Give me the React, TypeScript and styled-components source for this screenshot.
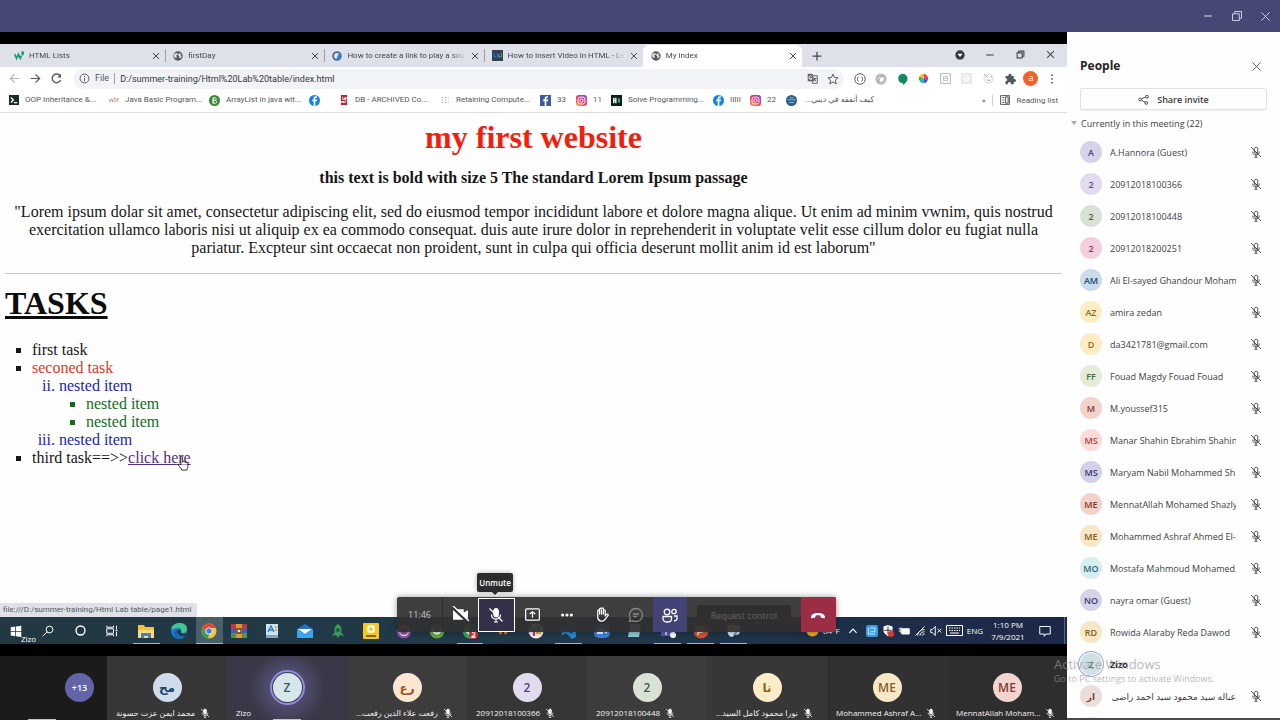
import React from "react";
import styled, { createGlobalStyle, css } from "styled-components";

const ui = `"Open Sans", "Noto Sans", "DejaVu Sans", sans-serif`;

const GlobalStyle = createGlobalStyle`
  * { box-sizing: border-box; }
  body { margin: 0; font-family: ${ui}; font-size: 9px; background: #000; }
  button { border: 0; padding: 0; background: none; font: inherit; color: inherit; display: flex; align-items: center; justify-content: center; }
  svg { display: block; flex: none; }
`;

/* ---------- frame ---------- */
const Screen = styled.div`
  display: flex;
  flex-direction: column;
  height: 100vh;
  overflow: hidden;
  position: relative;
`;
const TitleBar = styled.header`
  display: flex;
  justify-content: flex-end;
  align-items: center;
  flex: 0 0 32px;
  background: #464775;
  color: #d8d8ee;
`;
const TitleButton = styled.button`
  width: 29px;
  height: 32px;
`;
const Main = styled.div`
  display: flex;
  flex: 1;
  min-height: 0;
`;
const Stage = styled.main`
  display: flex;
  flex-direction: column;
  flex: 1;
  min-width: 0;
  padding-top: 12px;
  background: #000;
`;
const Desktop = styled.section`
  display: flex;
  flex-direction: column;
  flex: 1;
  min-height: 0;
  position: relative;
  background: #fefefe;
`;

/* ---------- browser ---------- */
const TabStrip = styled.div`
  display: flex;
  flex: 0 0 23px;
  padding: 0 2px 0 6px;
  background: #dee1e9;
  color: #45484d;
`;
const Tabs = styled.div`
  display: flex;
  flex: 0 0 796px;
`;
const Tab = styled.div<{ $active?: boolean; $last?: boolean }>`
  display: flex;
  align-items: center;
  gap: 5px;
  flex: 1 1 0;
  min-width: 0;
  padding: 0 8px;
  border-radius: 6px 6px 0 0;
  ${(p) => p.$active && css`background: #fff; margin-top: 1px;`}
  &::after {
    content: "";
    width: 1px;
    height: 13px;
    margin-right: -9px;
    background: ${(p) => (p.$active || p.$last ? "transparent" : "#9a9da5")};
  }
`;
const TabTitle = styled.button`
  flex: 1;
  min-width: 0;
  justify-content: flex-start;
  overflow: hidden;
  white-space: nowrap;
  font-size: 8px;
  line-height: 12px;
  font-family: Roboto, sans-serif;
  mask-image: linear-gradient(90deg, #000 88%, transparent);
`;
const NewTab = styled.button`
  width: 30px;
  height: 23px;
`;
const WindowControls = styled.div`
  display: flex;
  margin-left: auto;
  & > button { width: 30px; height: 21px; }
`;
const Toolbar = styled.div`
  display: flex;
  align-items: center;
  flex: 0 0 23px;
  padding: 0 4px;
  background: #fff;
  color: #55585c;
`;
const NavButton = styled.button<{ $dim?: boolean }>`
  width: 21px;
  height: 21px;
  opacity: ${(p) => (p.$dim ? 0.45 : 1)};
`;
const Omnibox = styled.div`
  display: flex;
  align-items: center;
  gap: 5px;
  flex: 1;
  min-width: 0;
  height: 20px;
  margin-left: 6px;
  padding: 0 3px 0 6px;
  border-radius: 10px;
  background: #f1f3f6;
  font-family: Roboto, sans-serif;
  font-size: 9px;
`;
const OmniLabel = styled.label`
  padding-right: 5px;
  border-right: 1px solid #9a9da2;
  line-height: 11px;
`;
const UrlInput = styled.input`
  flex: 1;
  min-width: 0;
  border: 0;
  padding: 0;
  background: none;
  font: inherit;
  color: #35383c;
  outline: 0;
`;
const OmniButton = styled.button`
  width: 16px;
  height: 16px;
`;
const Extensions = styled.div`
  display: flex;
  flex: 0 0 214px;
  margin-left: 5px;
  & > button { flex: 1 1 0; height: 20px; }
`;
const Profile = styled.span`
  width: 15px;
  height: 15px;
  border-radius: 50%;
  background: #f4602a;
  color: #fff;
  font-size: 9px;
  line-height: 14px;
  text-align: center;
`;
const Bookmarks = styled.nav`
  display: flex;
  align-items: center;
  gap: 11px;
  flex: 0 0 23px;
  padding: 0 9px 2px;
  border-bottom: 1px solid #dcdde0;
  background: #fff;
  color: #55585c;
  font-family: Roboto, "DejaVu Sans", sans-serif;
`;
const Bookmark = styled.a`
  display: flex;
  align-items: center;
  gap: 6px;
  flex: none;
  color: inherit;
  text-decoration: none;
`;
const BookmarkLabel = styled.span<{ $w: number }>`
  width: ${(p) => p.$w}px;
  line-height: 14px;
  font-size: 8px;
  white-space: nowrap;
`;
const BookmarksEnd = styled.div`
  display: flex;
  align-items: center;
  gap: 7px;
  margin-left: auto;
  white-space: nowrap;
  font-size: 8px;
`;
const Divider = styled.span`
  width: 1px;
  height: 11px;
  background: #cfd1d5;
`;

/* ---------- web page ---------- */
const Page = styled.article`
  flex: 1;
  min-height: 0;
  position: relative;
  padding: 6px 5px 0;
  color: #161616;
  font: 16px/18px "Liberation Serif", serif;
  overflow: hidden;
`;
const PageTitle = styled.h1`
  margin: 0 0 14px;
  color: #f11f10;
  font-size: 32px;
  line-height: 36px;
  text-align: center;
`;
const Lead = styled.p<{ $bold?: boolean }>`
  margin: 0 0 16px;
  font-weight: ${(p) => (p.$bold ? 700 : 400)};
  text-align: center;
`;
const Rule = styled.hr`
  height: 1px;
  margin: 0 0 11px;
  border: 0;
  background: #c8c8c8;
`;
const Heading = styled.h2`
  margin: 0 0 20px;
  color: #0c0c0c;
  font-size: 32px;
  line-height: 36px;
  text-decoration: underline;
  text-decoration-thickness: 3px;
`;
const TaskList = styled.ul<{ $color?: string }>`
  margin: 0;
  padding-left: 27px;
  list-style: square;
  color: ${(p) => p.$color || "inherit"};
`;
const Nested = styled.ol`
  margin: 0;
  padding-left: 27px;
  list-style: lower-roman;
  color: #2027b5;
`;
const RedItem = styled.li`
  color: #d8392f;
  &::marker { color: #161616; }
`;
const BlueItem = styled.li`
  &::marker { color: #2027b5; }
`;
const GreenItem = styled.li`
  &::marker { color: #176b1b; }
`;
const PageLink = styled.a`
  position: relative;
  color: #553080;
`;
const Pointer = styled.span`
  position: absolute;
  left: 49px;
  top: 7px;
`;
const StatusBubble = styled.div`
  position: absolute;
  left: 0;
  bottom: 0;
  height: 14px;
  width: 197px;
  padding-left: 3px;
  border-radius: 0 3px 0 0;
  background: #dee1e8;
  color: #55585c;
  font: 8px/14px Roboto, sans-serif;
  white-space: nowrap;
`;

/* ---------- Windows taskbar ---------- */
const Taskbar = styled.footer`
  display: flex;
  flex: 0 0 27px;
  background: linear-gradient(90deg, #223842, #21394a 55%, #1c2848);
  color: #fff;
  position: relative;
`;
const SystemButtons = styled.div`
  display: flex;
  flex: 0 0 130px;
  & > button { width: 32px; height: 27px; }
`;
const Apps = styled.div`
  display: flex;
  flex: 0 0 620px;
`;
const TaskbarApp = styled.button<{ $open?: boolean; $active?: boolean }>`
  flex: 1 1 0;
  height: 27px;
  background: ${(p) => (p.$active ? "#4b5f69" : "transparent")};
  border: solid transparent;
  border-width: 0 ${(p) => (p.$active ? 0 : 3)}px;
  background-clip: padding-box;
  box-shadow: ${(p) => (p.$open ? "inset 0 -1px 0 #78c0f8" : "none")};
  & > svg { width: 16px; height: 16px; }
`;
const Tray = styled.div`
  display: flex;
  align-items: center;
  gap: 4px;
  margin-left: auto;
  padding-right: 2px;
  font-size: 8px;
  white-space: nowrap;
`;
const Clock = styled.time`
  width: 42px;
  line-height: 12px;
  text-align: center;
`;
const TrayNote = styled.button`
  width: 32px;
  height: 27px;
  padding-right: 8px;
  border-right: 1px solid #5d6784;
`;
const SharerName = styled.span`
  position: absolute;
  left: 21px;
  bottom: -1px;
  font-size: 8px;
  line-height: 12px;
`;

/* ---------- meeting controls ---------- */
const Controls = styled.div`
  position: absolute;
  left: 397px;
  bottom: 12px;
  display: flex;
  width: 439px;
  height: 35px;
  border-radius: 2px;
  overflow: hidden;
  background: rgba(48, 47, 47, 0.93);
  box-shadow: 0 0 6px rgba(0, 0, 0, 0.4);
  color: #fff;
`;
const Timer = styled.span`
  flex: 0 0 46px;
  border-right: 1px solid #2c2c2c;
  color: #c5c5c5;
  font-size: 9px;
  line-height: 35px;
  text-align: center;
`;
const Control = styled.button<{ $kind?: "focus" | "people" | "dim" }>`
  flex: 1 1 0;
  min-width: 0;
  height: 35px;
  ${(p) => p.$kind === "focus" && css`height: 34px; margin: 1px 1px 0; border: 1px solid #fff; background: #33304a;`}
  ${(p) => p.$kind === "people" && css`background: #444375;`}
  ${(p) => p.$kind === "dim" && css`color: #858585;`}
`;
const RequestControl = styled.button`
  flex: 0 0 94px;
  height: 20px;
  margin: 8px 10px;
  background: #302f2e;
  color: #646464;
  font-size: 9px;
  white-space: nowrap;
`;
const HangUp = styled.button`
  flex: 0 0 35px;
  height: 35px;
  background: #9b2d46;
`;
const Tooltip = styled.div`
  position: absolute;
  left: 477px;
  bottom: 52px;
  width: 36px;
  border-radius: 2px;
  background: #2d2c2c;
  color: #fff;
  font: 600 8px/19px "Open Sans", sans-serif;
  text-align: center;
  box-shadow: 0 0 5px rgba(0, 0, 0, 0.3);
  &::after {
    content: "";
    position: absolute;
    left: 15px;
    top: 19px;
    border: 3px solid transparent;
    border-top-color: #2d2c2c;
  }
`;

/* ---------- participants ---------- */
const Strip = styled.section`
  display: flex;
  flex: 0 0 64px;
  margin-top: 12px;
  background: #1b1b1b;
`;
const Marker = styled.span`
  width: 28px;
  height: 1px;
  margin-top: auto;
  background: #c4c4c4;
`;
const More = styled.div`
  display: flex;
  flex: 0 0 107px;
  justify-content: space-between;
  padding: 17px 13px 0 28px;
`;
const Tile = styled.div<{ $speaking?: boolean; $shade: string }>`
  display: flex;
  flex-direction: column;
  align-items: center;
  flex: 1 1 0;
  min-width: 0;
  padding-top: 17px;
  background: ${(p) => (p.$speaking ? "radial-gradient(circle at 50% 50%, #625d92, #3a3847 56%)" : p.$shade)};
`;
const Avatar = styled.span<{ $bg: string; $fg: string; $size: number; $text?: number; $ring?: boolean }>`
  display: flex;
  align-items: center;
  justify-content: center;
  flex: none;
  width: ${(p) => p.$size}px;
  height: ${(p) => p.$size}px;
  border-radius: 50%;
  background: ${(p) => p.$bg};
  color: ${(p) => p.$fg};
  font-weight: 600;
  font-size: ${(p) => p.$text || 9}px;
  box-shadow: ${(p) => (!p.$ring ? "none" : p.$size > 22 ? "0 0 0 1px #3b3854, 0 0 0 3px #908ce0" : "0 0 0 1px #fff, 0 0 0 2px #9fa2ea")};
`;
const TileLabel = styled.div`
  display: flex;
  align-items: center;
  align-self: stretch;
  gap: 5px;
  margin-top: 5px;
  padding-left: 9px;
  color: #f2f2f2;
  font-size: 8px;
  line-height: 12px;
  white-space: nowrap;
`;

/* ---------- people panel ---------- */
const Panel = styled.aside`
  display: flex;
  flex-direction: column;
  flex: 0 0 213px;
  padding-top: 22px;
  border-bottom: 2px solid #4a4a4e;
  background: #fefefe;
  color: #403f3e;
`;
const PanelHead = styled.div`
  display: flex;
  align-items: center;
  justify-content: space-between;
  padding: 0 18px 0 13px;
`;
const PanelTitle = styled.h2`
  margin: 0;
  color: #252424;
  font-size: 12px;
  line-height: 24px;
`;
const ShareInvite = styled.button`
  gap: 8px;
  height: 22px;
  margin: 10px 13px 0;
  border: 1px solid #e3e2e1;
  border-radius: 2px;
  color: #3b3a39;
  font-weight: 600;
  box-shadow: 0 1px 1px rgba(0, 0, 0, 0.06);
`;
const Section = styled.button`
  justify-content: flex-start;
  gap: 4px;
  height: 26px;
  padding-left: 4px;
`;
const People = styled.ul`
  flex: 1;
  min-height: 0;
  overflow: hidden;
  margin: 0;
  padding: 0 18px 0 13px;
  list-style: none;
`;
const Person = styled.li<{ $bold?: boolean }>`
  display: flex;
  align-items: center;
  height: 32px;
  font-weight: ${(p) => (p.$bold ? 700 : 400)};
  ${(p) => p.$bold && css`color: #222;`}
`;
const Name = styled.span`
  width: 126px;
  margin: 0 14px 0 8px;
  overflow: hidden;
  white-space: nowrap;
`;
const Watermark = styled.div`
  position: absolute;
  right: 55px;
  bottom: 34px;
  width: 171px;
  color: rgba(150, 150, 150, 0.7);
  font-size: 9px;
  line-height: 14px;
  white-space: nowrap;
  pointer-events: none;
`;
const WatermarkTitle = styled.div`
  font-size: 13px;
  line-height: 16px;
`;

/* ---------- icons ---------- */
type IconProps = { size?: number; box?: number; stroke?: number; children: React.ReactNode };
const Icon = ({ size = 10, box = 16, stroke = 1.3, children }: IconProps) => (
  <svg width={size} height={size} viewBox={`0 0 ${box} ${box}`} fill="none" stroke="currentColor" strokeWidth={stroke} aria-hidden="true">
    {children}
  </svg>
);
const CloseIcon = ({ size = 8, stroke = 2 }) => <Icon size={size} stroke={stroke}><path d="M2 2l12 12M14 2L2 14" /></Icon>;
const MinimizeIcon = () => <Icon size={10}><path d="M2 8h12" strokeWidth={1.8} /></Icon>;
const RestoreIcon = ({ stroke = 1.5 }) => <Icon size={12} stroke={stroke}><path d="M2 5h9v9H2zM5 5V2h9v9h-3" /></Icon>;
const MicOff = ({ size = 12, solid = false }) => (
  <Icon size={size} stroke={1.2}>
    <path d="M5.8 3.5a2.3 2.3 0 014.5 0V8a2.3 2.3 0 01-4.5 0z" fill={solid ? "currentColor" : "none"} />
    <path d="M3.5 7.5c0 6 9 6 9 0M8 12v3M6 15h4M1.5 1.5l13 13" />
  </Icon>
);
const Globe = () => (
  <Icon size={10}>
    <circle cx="8" cy="8" r="7.5" fill="#55585e" stroke="none" />
    <path d="M3 4l4-1 1 2-3 2 1 2-1 3-3-3-1-2zM10 3l3 2-1 2 2 1-2 4-2-1v-3L8 7z" fill="#dfe1e6" stroke="none" />
  </Icon>
);
const Facebook = ({ square = false }) => (
  <Icon size={11}>
    {square ? <rect width="16" height="16" fill="#3f5c9a" stroke="none" /> : <circle cx="8" cy="8" r="8" fill="#1382f0" stroke="none" />}
    <path d="M9.2 16V9h2.2l.4-2.3H9.2V5.4c0-1 .4-1.4 2.4-1.2V2.1C8.2 1.5 6.8 2.7 6.8 5.2v1.5H4.7V9h2.1v7z" fill="#fff" stroke="none" />
  </Icon>
);
const Instagram = () => (
  <Icon size={11}>
    <defs><linearGradient id="ig" x1="0" y1="1" x2=".7" y2="0"><stop stopColor="#ffb13c" /><stop offset=".5" stopColor="#ee3e67" /><stop offset="1" stopColor="#9546c6" /></linearGradient></defs>
    <rect width="16" height="16" rx="4" fill="url(#ig)" stroke="none" />
    <rect x="3" y="3" width="10" height="10" rx="3" stroke="#fff" /><circle cx="8" cy="8" r="2.4" stroke="#fff" />
  </Icon>
);
const W3 = () => <Icon><path d="M1 5l3 7 3-7 3 7 2-5M12 2h3l-2 2 2 1-2 1" stroke="#159a72" strokeWidth="2.4" /></Icon>;
const BlueRing = () => <Icon><circle cx="8" cy="8" r="6.2" stroke="#506b8a" strokeWidth="3" /><path d="M7 13L11 3l3 3-1 6-4 2z" fill="#2c83dc" stroke="none" /></Icon>;
const LwTile = () => <Icon size={11}><rect width="16" height="16" fill="#343e50" stroke="none" /><path d="M3 5v5h3M8 5v5h2V6v4h2" stroke="#2f86d4" /><path d="M12 5h2v5h-3" stroke="#75a342" /></Icon>;

const bookmarks: { icon: React.ReactNode; label: string; w: number; rtl?: boolean }[] = [
  { icon: <Icon><rect width="16" height="16" fill="#1a2a2b" stroke="none" /><path d="M3 4l4 4-4 4M8 12h5" stroke="#fff" strokeWidth="2" /></Icon>, label: "OOP Inheritance &...", w: 73 },
  { icon: <Icon><path d="M0 6l2 5 2-5 2 5 1-5M8 5h3l-2 2 2 2-3 2" stroke="#d8817b" /><path d="M13 11V6h3" stroke="#888" /></Icon>, label: "Java Basic Program...", w: 73 },
  { icon: <Icon size={11}><circle cx="8" cy="8" r="8" fill="#3a8a33" stroke="none" /><path d="M6 4h3c2 0 2 4 0 4H6zm0 4h3c3 0 3 4 0 4H6zm0-4v8" stroke="#fff" /></Icon>, label: "ArrayList in java wit...", w: 72 },
  { icon: <Facebook />, label: "", w: 2 },
  { icon: <Icon><path d="M3 0h10v4H8v2h5v10H3v-4h5v-2H3z" fill="#a92c31" stroke="none" /><path d="M6 3v4h4v5H6" stroke="#fff" /></Icon>, label: "DB - ARCHIVED Co...", w: 74 },
  { icon: <Icon><path d="M2 4h3m2 0h3m2 0h2M2 8h4m2 0h3m2 0h1M2 12h3m2 0h3m2 0h2" stroke="#aaa" /></Icon>, label: "Retaining Compute...", w: 73 },
  { icon: <Facebook square />, label: "33", w: 8 },
  { icon: <Instagram />, label: "11", w: 7 },
  { icon: <Icon size={11}><rect width="16" height="16" fill="#111c1d" stroke="none" /><path d="M4 4v8M7 4v8M4 8h3" stroke="#fff" strokeWidth="2" /><path d="M10 5h3v6h-3z" fill="#26b978" stroke="none" /></Icon>, label: "Solve Programming...", w: 74 },
  { icon: <Facebook />, label: "IIIII", w: 9 },
  { icon: <Instagram />, label: "22", w: 8 },
  { icon: <Icon size={11}><circle cx="8" cy="8" r="8" fill="#285a87" stroke="none" /><path d="M2 7h12M4 11h8M5 4h6" stroke="#9fc3df" /></Icon>, label: "كيف أتفقه في ديني...", w: 71, rtl: true },
];

const extensions: { name: string; icon: React.ReactNode }[] = [
  { name: "Braces", icon: <Icon size={12}><circle cx="8" cy="8" r="7" /><path d="M6 5C4 5 6 7 4 8c2 1 0 3 2 3M10 5c2 0 0 2 2 3-2 1 0 3-2 3" /></Icon> },
  { name: "Rings", icon: <Icon size={12}><circle cx="8" cy="8" r="5.5" stroke="#bbb" strokeWidth="4" /><path d="M5 12C5 7 8 4 11 4" stroke="#888" /></Icon> },
  { name: "Chat", icon: <Icon size={12}><path d="M8 1a6.500 6.500 0 016 7c0 3-3 6-6 8v-2C-1 13 0 1 8 1z" fill="#128a63" stroke="none" /></Icon> },
  { name: "Colour wheel", icon: <Icon size={11}><path d="M8 8V1a7 7 0 016 4z" fill="#ff3b30" stroke="none" /><path d="M8 8l6-3a7 7 0 010 6z" fill="#c02ad0" stroke="none" /><path d="M8 8l6 3a7 7 0 01-6 4z" fill="#2a52e8" stroke="none" /><path d="M8 8v7a7 7 0 01-6-4z" fill="#12b8c8" stroke="none" /><path d="M8 8l-6 3a7 7 0 010-6z" fill="#2cb62c" stroke="none" /><path d="M8 8L2 5a7 7 0 016-4z" fill="#f8c400" stroke="none" /></Icon> },
  { name: "Reader", icon: <Icon size={11}><rect x="1" y="1" width="14" height="14" stroke="#aaa" /><path d="M5 5h6v6H5zM5 8h6" stroke="#bbb" /></Icon> },
  { name: "Blank", icon: <Icon size={11}><rect x="1" y="1" width="14" height="14" fill="#efefef" stroke="#ddd" /><circle cx="8" cy="8" r="3" stroke="#fff" /></Icon> },
  { name: "Face", icon: <Icon size={11}><circle cx="8" cy="8" r="6.5" stroke="#ccc" /><path d="M2 2l4 4M11 5l2 1M6 6h1M6 10c2 1 3 1 5 0" stroke="#888" /></Icon> },
  { name: "Extensions", icon: <Icon size={12}><path d="M2 4h4c-1-4 5-4 4 0h3v4c4-1 4 5 0 4v3H9c1-4-4-4-4 0H2v-4c3 0 3-4 0-4z" fill="#55585c" stroke="none" /></Icon> },
  { name: "Profile", icon: <Profile>a</Profile> },
  { name: "Menu", icon: <Icon size={12}><path d="M8 2v2M8 7v2M8 12v2" strokeWidth="2.2" /></Icon> },
];

const Dot = ({ c, children }: { c: string; children?: React.ReactNode }) => (
  <Icon><circle cx="8" cy="8" r="7.5" fill={c} stroke="none" />{children}</Icon>
);
const apps: { name: string; icon: React.ReactNode; open?: boolean; active?: boolean }[] = [
  { name: "File Explorer", open: true, icon: <Icon><path d="M0 2h6l1 2h9v11H0z" fill="#f4c13f" stroke="none" /><path d="M0 7h16v8H0z" fill="#ffdb76" stroke="none" /><path d="M3 15v-5h10v5h-3v-2H6v2z" fill="#3487d2" stroke="none" /></Icon> },
  { name: "Edge", icon: <Icon><circle cx="8" cy="8" r="8" fill="#147ed0" stroke="none" /><path d="M0 7C1-2 16-2 16 6c0 4-5 5-6 3 1-3-1-5-4-4-3 0-5 1-6 2z" fill="#42c78e" stroke="none" /><path d="M6 8c0 4 4 6 8 5 1 0 2-2 1-3-2 1-5 1-5-1 1-2-3-4-4-1z" fill="#21384a" stroke="none" /><path d="M6 8c-1 4 3 8 7 6-5 4-11 0-10-5 1-2 3-3 5-2-1 0-2 0-2 1z" fill="#1665b4" stroke="none" /></Icon> },
  { name: "Chrome", open: true, active: true, icon: <Icon><circle cx="8" cy="8" r="7.5" fill="#f0c63a" stroke="none" /><path d="M1.500 4.200A7.500 7.500 0 0114.800 5H8L5 9.500z" fill="#df4935" stroke="none" /><path d="M1.500 4.200L5 10l3 1.500L7 15.500A7.500 7.500 0 011.500 4.200z" fill="#3b9f52" stroke="none" /><circle cx="8" cy="8" r="3.500" fill="#fff" stroke="none" /><circle cx="8" cy="8" r="2.700" fill="#3d7ee8" stroke="none" /></Icon> },
  { name: "WinRAR", icon: <Icon><path d="M0 1h16v5H0z" fill="#b73a48" stroke="none" /><path d="M0 6h16v4H0z" fill="#3f61b0" stroke="none" /><path d="M0 10h16v5H0z" fill="#4b944b" stroke="none" /><path d="M5 1h6v14H5z" fill="#d99a36" stroke="none" /><path d="M6 6h4v4H6z" fill="#fff2b8" stroke="#713522" /></Icon> },
  { name: "WordPad", icon: <Icon><path d="M2 1h12v13H2z" fill="#c9e3f5" stroke="none" /><path d="M2 12h12v3H2z" fill="#8aa4b8" stroke="none" /><path d="M4 9l3-6 3 6M5 7h4" stroke="#287cc0" /><path d="M11 4h2M11 7h2" stroke="#e88d36" /></Icon> },
  { name: "Mail", icon: <Icon><path d="M0 6l8-5 8 5v9H0z" fill="#1877c9" stroke="none" /><path d="M1 6h14l-7 5z" fill="#fff" stroke="none" /><path d="M0 6l8 5 8-5v9H0z" fill="#35a5ed" stroke="none" /></Icon> },
  { name: "Rocket", icon: <Icon><path d="M8 1c4 3 4 6 3 8l3 4-4-1-2 3-2-3-4 1 3-4C4 7 4 4 8 1z" fill="#3e9a5c" stroke="none" /><circle cx="8" cy="7" r="2" fill="#1f5d43" stroke="none" /></Icon> },
  { name: "Player", icon: <Icon><rect width="16" height="16" rx="1" fill="#f7c91f" stroke="none" /><circle cx="8" cy="6" r="3" stroke="#fff" strokeWidth="2" /><path d="M3 13h10" stroke="#7d6920" strokeWidth="2" /></Icon> },
  { name: "Tor", icon: <Dot c="#8450a0"><circle cx="8" cy="8" r="4.5" stroke="#e8d8ee" /></Dot> },
  { name: "uTorrent", icon: <Dot c="#62a544"><path d="M4 5c0 7 6 7 8 2" stroke="#fff" strokeWidth="2" /></Dot> },
  { name: "WhatsApp", open: true, icon: <Dot c="#32a85b"><path d="M4 4c0 5 2 7 5 7" stroke="#fff" strokeWidth="2" /><circle cx="11.500" cy="11.500" r="4.500" fill="#dc3138" stroke="none" /><path d="M10 10c2-1.500 3.500 0 2.500 1.500L10 14h3.500" stroke="#fff" /></Dot> },
  { name: "Editor", icon: <Icon><path d="M2 3c4 0 5 3 3 8M14 3c-4 0-5 3-3 8" stroke="#dd7d2f" strokeWidth="3" /></Icon> },
  { name: "Slack", icon: <Dot c="#f6f0f0"><path d="M4 6h4" stroke="#35b6dc" strokeWidth="2" /><path d="M10 3v5" stroke="#33a874" strokeWidth="2" /><path d="M8 10h5" stroke="#e7b534" strokeWidth="2" /><path d="M6 8v5" stroke="#d7336a" strokeWidth="2" /></Dot> },
  { name: "VS Code", open: true, icon: <Icon><path d="M11 0l4 2v12l-4 2-6-6-3 2-2-1 3-3-3-3 2-1 3 2zM11 5L7 8l4 3z" fill="#238bd2" stroke="none" /></Icon> },
  { name: "Zoom", icon: <Icon><rect y="1" width="16" height="14" rx="5" fill="#3f7fe4" stroke="none" /><path d="M3 6h6v5H3zM10 8l3-2v5l-3-2z" fill="#fff" stroke="none" /></Icon> },
  { name: "Notepad", icon: <Icon><path d="M3 1h11l-2 13H1z" fill="#8bcbd7" stroke="none" /><path d="M4 5h7M4 8h7" stroke="#fff" /></Icon> },
  { name: "Teams", open: true, icon: <Icon><path d="M1 3h10v10H1z" fill="#5558b8" stroke="none" /><circle cx="12" cy="4" r="3" fill="#7378d7" stroke="none" /><path d="M3 6h6M6 6v6" stroke="#fff" /><circle cx="13" cy="12" r="3" fill="#fff" stroke="none" /></Icon> },
  { name: "PowerPoint", open: true, icon: <Dot c="#cc5434"><path d="M5 12V5h3c3 0 3 4 0 4H5" stroke="#fff" /></Dot> },
  { name: "Paint", open: true, icon: <Icon><path d="M2 3c7-5 14 0 12 6-2 5-4 1-6 3-2 5-9-1-6-9z" fill="#d7e5ec" stroke="none" /><path d="M15 3l-7 9" stroke="#56a5d0" strokeWidth="2" /><circle cx="5" cy="6" r="1.5" fill="#e45a42" stroke="none" /></Icon> },
];

const tiles = [
  { initials: "مح", name: "محمد ايمن عزت حسونة", bg: "#cfdceb", fg: "#20446b", shade: "#373737", rtl: true },
  { initials: "Z", name: "Zizo", bg: "#d7e6e9", fg: "#39575d", shade: "#3a3847", speaking: true },
  { initials: "رع", name: "رفعت علاء الدين رفعت...", bg: "#fbe6d2", fg: "#955522", shade: "#3c3c3c", rtl: true },
  { initials: "2", name: "20912018100366", bg: "#e1dced", fg: "#4f4280", shade: "#363636" },
  { initials: "2", name: "20912018100448", bg: "#dae2d6", fg: "#455e38", shade: "#3c3c3c" },
  { initials: "نا", name: "نورا محمود كامل السيد...", bg: "#fdecc8", fg: "#8c661a", shade: "#373737", rtl: true },
  { initials: "ME", name: "Mohammed Ashraf A...", bg: "#f8e8c8", fg: "#836125", shade: "#313131" },
  { initials: "ME", name: "MennatAllah Moham...", bg: "#f3d5d0", fg: "#803b35", shade: "#2e2e2e" },
];

const people = [
  ["A", "A.Hannora (Guest)", "#d5d3ea", "#454080"],
  ["2", "20912018100366", "#e0dced", "#594b83"],
  ["2", "20912018100448", "#dae1d6", "#465d3c"],
  ["2", "20912018200251", "#f4cfdd", "#922d56"],
  ["AM", "Ali El-sayed Ghandour Moham", "#cbdbea", "#204a77"],
  ["AZ", "amira zedan", "#fdedc4", "#8e6b1d"],
  ["D", "da3421781@gmail.com", "#fdecc3", "#8e6c1d"],
  ["FF", "Fouad Magdy Fouad Fouad", "#e2ecd9", "#486c32"],
  ["M", "M.youssef315", "#f1d2cc", "#893c30"],
  ["MS", "Manar Shahin Ebrahim Shahin", "#fadbd7", "#a44440"],
  ["MS", "Maryam Nabil Mohammed Sh.", "#d2d1e8", "#383474"],
  ["ME", "MennatAllah Mohamed Shazly", "#f1d3cd", "#8b352a"],
  ["ME", "Mohammed Ashraf Ahmed El-", "#f8e7c6", "#815d1b"],
  ["MO", "Mostafa Mahmoud Mohamed.", "#d6eef0", "#306a70"],
  ["NO", "nayra omar (Guest)", "#d5d3e8", "#403a74"],
  ["RD", "Rowida Alaraby Reda Dawod", "#f8e7c6", "#805e20"],
  ["Z", "Zizo", "#cfe1e5", "#456e77"],
  ["ار", "عباله سيد محمود سيد احمد راضى", "#eaddda", "#784b43"],
  ["", "", "#fbe4c2", "#805e20"],
];
const isArabic = (text: string) => /[\u0600-\u06ff]/.test(text);

const BrowserTab = ({ icon, title, active, last }: { icon: React.ReactNode; title: string; active?: boolean; last?: boolean }) => (
  <Tab $active={active} $last={last}>
    {icon}
    <TabTitle>{title}</TabTitle>
    <button aria-label={`Close ${title}`}><CloseIcon /></button>
  </Tab>
);

export default function App() {
  return (
    <Screen>
      <GlobalStyle />
      <TitleBar>
        <TitleButton aria-label="Minimize"><MinimizeIcon /></TitleButton>
        <TitleButton aria-label="Restore"><RestoreIcon stroke={1.2} /></TitleButton>
        <TitleButton aria-label="Close"><CloseIcon size={11} stroke={1.3} /></TitleButton>
      </TitleBar>
      <Main>
        <Stage>
          <Desktop>
            <TabStrip>
              <Tabs>
                <BrowserTab icon={<W3 />} title="HTML Lists" />
                <BrowserTab icon={<Globe />} title="firstDay" />
                <BrowserTab icon={<BlueRing />} title="How to create a link to play a sou" />
                <BrowserTab icon={<LwTile />} title="How to Insert Video in HTML - Le" last />
                <BrowserTab icon={<Globe />} title="My index" active />
              </Tabs>
              <NewTab aria-label="New tab"><Icon><path d="M8 1v14M1 8h14" strokeWidth="2" /></Icon></NewTab>
              <WindowControls>
                <button aria-label="Search tabs"><Icon><circle cx="8" cy="8" r="7.5" fill="#35383e" stroke="none" /><path d="M4 6h8l-4 5z" fill="#fff" stroke="none" /></Icon></button>
                <button aria-label="Minimize window"><MinimizeIcon /></button>
                <button aria-label="Restore window"><Icon size={9} stroke={2}><path d="M2 5h9v9H2zM5 5V2h9v9h-3" /></Icon></button>
                <button aria-label="Close window"><CloseIcon size={9} stroke={1.8} /></button>
              </WindowControls>
            </TabStrip>
            <Toolbar>
              <NavButton $dim aria-label="Back"><Icon size={11} stroke={1.8}><path d="M15 8H2M8 2L2 8l6 6" /></Icon></NavButton>
              <NavButton aria-label="Forward"><Icon size={11} stroke={1.8}><path d="M1 8h13M8 2l6 6-6 6" /></Icon></NavButton>
              <NavButton aria-label="Reload"><Icon size={11} stroke={2}><path d="M13.5 4.5A6.3 6.3 0 1014 10" /><path d="M14.5 1v5.5H9z" fill="currentColor" stroke="none" /></Icon></NavButton>
              <Omnibox>
                <Icon size={11} stroke={1.4}><circle cx="8" cy="8" r="6.5" /><path d="M8 7v5M8 4v1.5" /></Icon>
                <OmniLabel htmlFor="url">File</OmniLabel>
                <UrlInput id="url" defaultValue="D:/summer-training/Html%20Lab%20table/index.html" />
                <OmniButton aria-label="Translate"><Icon size={11}><path d="M6 4h9v11H8z" /><path d="M1 1h7l3 11H1z" fill="#666" stroke="none" /><path d="M7 5a2.5 2.5 0 10.5 3H5" stroke="#fff" /><path d="M10 8h4M12 7c0 3-2 4-2 4M11 9l2 3" /></Icon></OmniButton>
                <OmniButton aria-label="Bookmark"><Icon size={12}><path d="M8 1.5l2 4.500 4.800.4-3.700 3.200 1.200 4.900L8 12l-4.300 2.500 1.200-4.900L1.200 6.400 6 6z" /></Icon></OmniButton>
              </Omnibox>
              <Extensions>
                {extensions.map((e) => <button key={e.name} aria-label={e.name}>{e.icon}</button>)}
              </Extensions>
            </Toolbar>
            <Bookmarks>
              {bookmarks.map((b, i) => (
                <Bookmark key={i} href="#" aria-label={b.label || "Facebook"}>
                  {b.icon}
                  <BookmarkLabel $w={b.w} dir={b.rtl ? "rtl" : "ltr"}>{b.label}</BookmarkLabel>
                </Bookmark>
              ))}
              <BookmarksEnd>
                <button aria-label="More bookmarks">»</button>
                <Divider />
                <Bookmark as="button"><Icon stroke={1.6}><path d="M1 1h14v14H1zM4 4h3M4 8h3M4 12h3M9 3h4v10H9z" /></Icon>Reading list</Bookmark>
              </BookmarksEnd>
            </Bookmarks>
            <Page>
              <PageTitle>my first website</PageTitle>
              <Lead $bold>this text is bold with size 5 The standard Lorem Ipsum passage</Lead>
              <Lead>
                "Lorem ipsum dolar sit amet, consectetur adipiscing elit, sed do eiusmod tempor incididunt labore et dolore magna alique. Ut enim ad minim vwnim, quis nostrud exercitation ullamco laboris nisi ut aliquip ex ea commodo consequat. duis aute irure dolor in reprehenderit in voluptate velit esse cillum dolor eu fugiat nulla pariatur. Excpteur sint occaecat non proident, sunt in culpa qui officia deserunt mollit anim id est laborum"
              </Lead>
              <Rule />
              <Heading>TASKS</Heading>
              <TaskList>
                <li>first task</li>
                <RedItem>
                  seconed task
                  <Nested start={2}>
                    <BlueItem>
                      nested item
                      <TaskList $color="#176b1b"><GreenItem>nested item</GreenItem><GreenItem>nested item</GreenItem></TaskList>
                    </BlueItem>
                    <BlueItem>nested item</BlueItem>
                  </Nested>
                </RedItem>
                <li>
                  third task==&gt;&gt;
                  <PageLink href="#">
                    click here
                    <Pointer>
                      <svg width="12" height="15" viewBox="0 0 13 17" fill="rgba(255,255,255,0.5)" stroke="#222" strokeWidth="1"><path d="M4 10V2c0-2 2-2 2 0v5c0-1.500 2-1.500 2 0 0-1 2-1 2 .5 0-1 2-1 2 .5v4c0 2-1 2-1 4H5c0-2-3-4-4-6 0-1 2-1 3 0z" /></svg>
                    </Pointer>
                  </PageLink>
                </li>
              </TaskList>
              <StatusBubble>file:///D:/summer-training/Html Lab table/page1.html</StatusBubble>
            </Page>
            <Taskbar>
              <SystemButtons>
                <button aria-label="Start"><Icon size={12}><path d="M1 3l6-1v6H1zM8 2l7-1v7H8zM1 9h6v6l-6-1zM8 9h7v7l-7-1z" fill="#fff" stroke="none" /></Icon></button>
                <button aria-label="Search"><Icon size={12}><circle cx="10" cy="6" r="4.5" /><path d="M7 9l-6 6" /></Icon></button>
                <button aria-label="Cortana"><Icon size={11} stroke={2}><circle cx="8" cy="8" r="6.5" /></Icon></button>
                <button aria-label="Task view"><Icon size={12}><path d="M1 5h9v6H1zM1 1v2h9V1M1 15v-2h9v2M14 1v5M14 9v6M12.500 7.500h3" /></Icon></button>
              </SystemButtons>
              <SharerName>Zizo</SharerName>
              <Apps>
                {apps.map((a) => <TaskbarApp key={a.name} aria-label={a.name} $open={a.open} $active={a.active}>{a.icon}</TaskbarApp>)}
              </Apps>
              <Tray>
                <Icon size={13}><circle cx="8" cy="8" r="7.5" fill="#f0a526" stroke="none" /></Icon>
                <span>84°F</span>
                <Icon size={18} box={20}><path d="M6 12l4-4 4 4" /></Icon>
                <Icon size={12}><rect width="16" height="16" rx="3" fill="#3d9ce0" stroke="none" /><path d="M3 4v8h9M5 4h7v5H6" stroke="#c9ecff" /></Icon>
                <Icon size={12}><path d="M2 2l6-2 6 2v5c0 4-3 6-6 8-3-2-6-4-6-8z" fill="#fff" stroke="none" /><path d="M8 2v11M3 7h10" stroke="#333" /><circle cx="12" cy="12" r="4" fill="#df3232" stroke="none" /></Icon>
                <Icon size={12}><path d="M1 5h3M1 8h3M4 3v8" /><path d="M5 5h10v7H5z" fill="#fff" /></Icon>
                <Icon size={12}><path d="M2 14L14 2M5 14c0-4 4-8 9-8M8 14c0-3 3-5 6-5M11 14c0-1 1-2 3-2" /></Icon>
                <Icon size={12}><path d="M1 6h2l4-4v12l-4-4H1zM10 5l5 5M15 5l-5 5" /></Icon>
                <svg width="17" height="11" viewBox="0 0 17 11" fill="none" stroke="#fff"><path d="M.5.5h16v10H.5z" /><path d="M3 3h11M3 5.500h11" strokeDasharray="1.500 1" /><path d="M4 8h9" /></svg>
                <span>ENG</span>
                <Clock>1:10 PM<br />7/9/2021</Clock>
                <TrayNote aria-label="Notifications"><Icon size={12}><path d="M1 2h14v10H9l-2 3v-3H1z" /></Icon></TrayNote>
              </Tray>
            </Taskbar>
            <Tooltip role="tooltip">Unmute</Tooltip>
            <Controls>
              <Timer>11:46</Timer>
              <Control aria-label="Turn camera on"><Icon size={17}><path d="M1 3h10v3l4-2v8l-4-2v3H1z" fill="#fff" stroke="none" /><path d="M0 1l15 14" stroke="#333" strokeWidth="2.5" /><path d="M1 0l15 14" stroke="#fff" /></Icon></Control>
              <Control $kind="focus" aria-label="Unmute"><MicOff size={16} solid /></Control>
              <Control aria-label="Share screen"><Icon size={15}><rect x=".7" y="2" width="14.6" height="12" rx="1" /><path d="M8 11.500V5M5 7.500L8 5l3 2.500" /></Icon></Control>
              <Control aria-label="More actions"><Icon size={14}><g fill="#fff" stroke="none"><circle cx="3" cy="8" r="1.8" /><circle cx="8" cy="8" r="1.8" /><circle cx="13" cy="8" r="1.8" /></g></Icon></Control>
              <Control aria-label="Raise hand"><Icon size={15}><path d="M4 9V4c0-1.400 2-1.400 2 0V2.500c0-1.600 2-1.600 2 0V2c0-1.500 2-1.500 2 0v2c0-1.400 2-1.400 2 0v5l2-1.500c1 0 1.500.8 1 1.500l-3 4c-2 3-8 3-8-2zM6 4v4M8 3v5M10 3v5" /></Icon></Control>
              <Control $kind="dim" aria-label="Chat"><Icon size={16}><path d="M8 1.500a6.500 6.500 0 110 13c-1 0-2-.2-3-.7l-3.500.7.8-3.300A6.500 6.500 0 018 1.500zM5 7h6M5 9.500h4" /></Icon></Control>
              <Control $kind="people" aria-label="People"><Icon size={16}><circle cx="5" cy="5" r="2.8" /><circle cx="12" cy="4.5" r="2.2" /><path d="M1 9.500h8.500V12c0 4-8.500 4-8.500 0zM12 9h3v2.500c0 1.500-1.500 2.300-3 2.300" /></Icon></Control>
              <RequestControl disabled>Request control</RequestControl>
              <HangUp aria-label="Leave"><Icon size={16}><path d="M1 10C1 4.500 15 4.500 15 10c0 1-.5 1.500-1.500 1.300l-2-.5c-1-.3-1-.8-1-2-1.500-.6-3.500-.6-5 0 0 1.200 0 1.700-1 2l-2 .5C1.500 11.500 1 11 1 10z" fill="#fff" stroke="none" /></Icon></HangUp>
            </Controls>
          </Desktop>
          <Strip>
            <More><Marker /><Avatar $size={29} $bg="#6264a7" $fg="#fff">+13</Avatar></More>
            {tiles.map((t) => (
              <Tile key={t.name} $shade={t.shade} $speaking={t.speaking}>
                <Avatar $size={29} $text={12} $bg={t.bg} $fg={t.fg} $ring={t.speaking}>{t.initials}</Avatar>
                <TileLabel>
                  <span dir={t.rtl ? "rtl" : "ltr"}>{t.name}</span>
                  {!t.speaking && <MicOff size={10} solid />}
                </TileLabel>
                {t.speaking && <Marker />}
              </Tile>
            ))}
          </Strip>
        </Stage>
        <Panel>
          <PanelHead>
            <PanelTitle>People</PanelTitle>
            <button aria-label="Close people panel"><CloseIcon size={11} stroke={1.2} /></button>
          </PanelHead>
          <ShareInvite><Icon size={11}><circle cx="3" cy="8" r="2" /><circle cx="13" cy="4" r="2" /><circle cx="12" cy="13" r="2" /><path d="M5 7l6-2.500M5 9l5.500 3" /></Icon>Share invite</ShareInvite>
          <Section><svg width="6" height="4" viewBox="0 0 6 4"><path d="M0 0h6L3 4z" fill="#aaa" /></svg>Currently in this meeting (22)</Section>
          <People>
            {people.map(([initials, name, bg, fg], i) => (
              <Person key={i} $bold={name === "Zizo"}>
                <Avatar $size={22} $bg={bg} $fg={fg} $ring={name === "Zizo"}>{initials}</Avatar>
                <Name dir={isArabic(name) ? "rtl" : "ltr"}>{name}</Name>
                {name && name !== "Zizo" && <MicOff />}
              </Person>
            ))}
          </People>
        </Panel>
      </Main>
      <Watermark><WatermarkTitle>Activate Windows</WatermarkTitle>Go to PC settings to activate Windows.</Watermark>
    </Screen>
  );
}
